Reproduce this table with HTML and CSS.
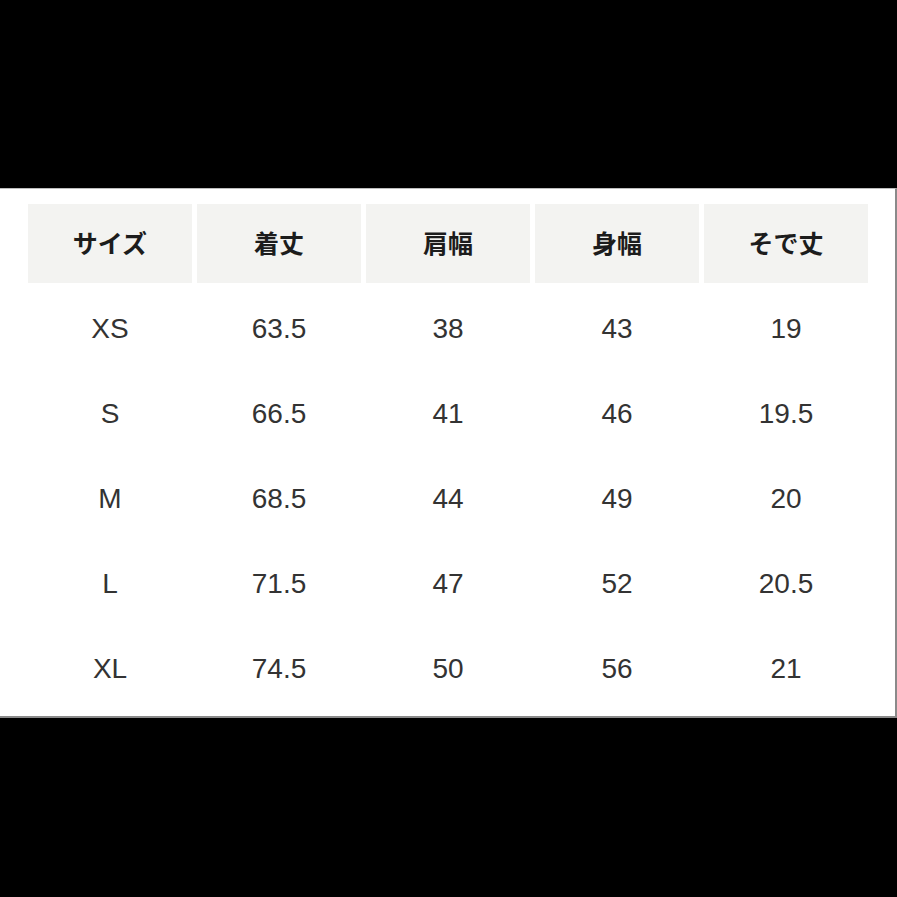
FILE: index.html
```html
<!DOCTYPE html>
<html lang="ja">
<head>
<meta charset="utf-8">
<link rel="stylesheet" href="styles.css">
</head>
<body>
<div class="top"></div>
<div class="panel">
  <div class="grid">
    <div class="hd">サイズ</div>
    <div class="hd">着丈</div>
    <div class="hd">肩幅</div>
    <div class="hd">身幅</div>
    <div class="hd">そで丈</div>

    <div class="cell">XS</div><div class="cell">63.5</div><div class="cell">38</div><div class="cell">43</div><div class="cell">19</div>
    <div class="cell">S</div><div class="cell">66.5</div><div class="cell">41</div><div class="cell">46</div><div class="cell">19.5</div>
    <div class="cell">M</div><div class="cell">68.5</div><div class="cell">44</div><div class="cell">49</div><div class="cell">20</div>
    <div class="cell">L</div><div class="cell">71.5</div><div class="cell">47</div><div class="cell">52</div><div class="cell">20.5</div>
    <div class="cell">XL</div><div class="cell">74.5</div><div class="cell">50</div><div class="cell">56</div><div class="cell">21</div>
  </div>
</div>
</body>
</html>
```
FILE: styles.css
```css
html, body {
  margin: 0;
  padding: 0;
  background: #000;
  width: 897px;
  height: 897px;
  overflow: hidden;
}
.top {
  height: 188px;
}
.panel {
  box-sizing: border-box;
  width: 897px;
  height: 530px;
  background: #fff;
  border-top: 1px solid #bdbdbd;
  border-right: 2px solid #8a8a8a;
  border-bottom: 2px solid #8a8a8a;
  padding: 15px 0 0 28px;
}
.grid {
  display: grid;
  grid-template-columns: repeat(5, 164px);
  grid-template-rows: 79px repeat(5, 85px);
  column-gap: 5px;
  row-gap: 0;
}
.hd {
  background: #f3f3f1;
  display: flex;
  align-items: center;
  justify-content: center;
  font-family: "Noto Sans CJK JP", "Noto Sans", sans-serif;
  font-weight: 700;
  font-size: 25px;
  color: #1c1c1c;
  margin-bottom: 3px;
  padding-bottom: 3px;
  box-sizing: border-box;
}
.grid .hd {
  height: 79px;
}
.cell {
  display: flex;
  align-items: center;
  justify-content: center;
  font-family: "Liberation Sans", Arial, sans-serif;
  font-size: 28px;
  color: #333;
  transform: translateY(3px);
}
```
